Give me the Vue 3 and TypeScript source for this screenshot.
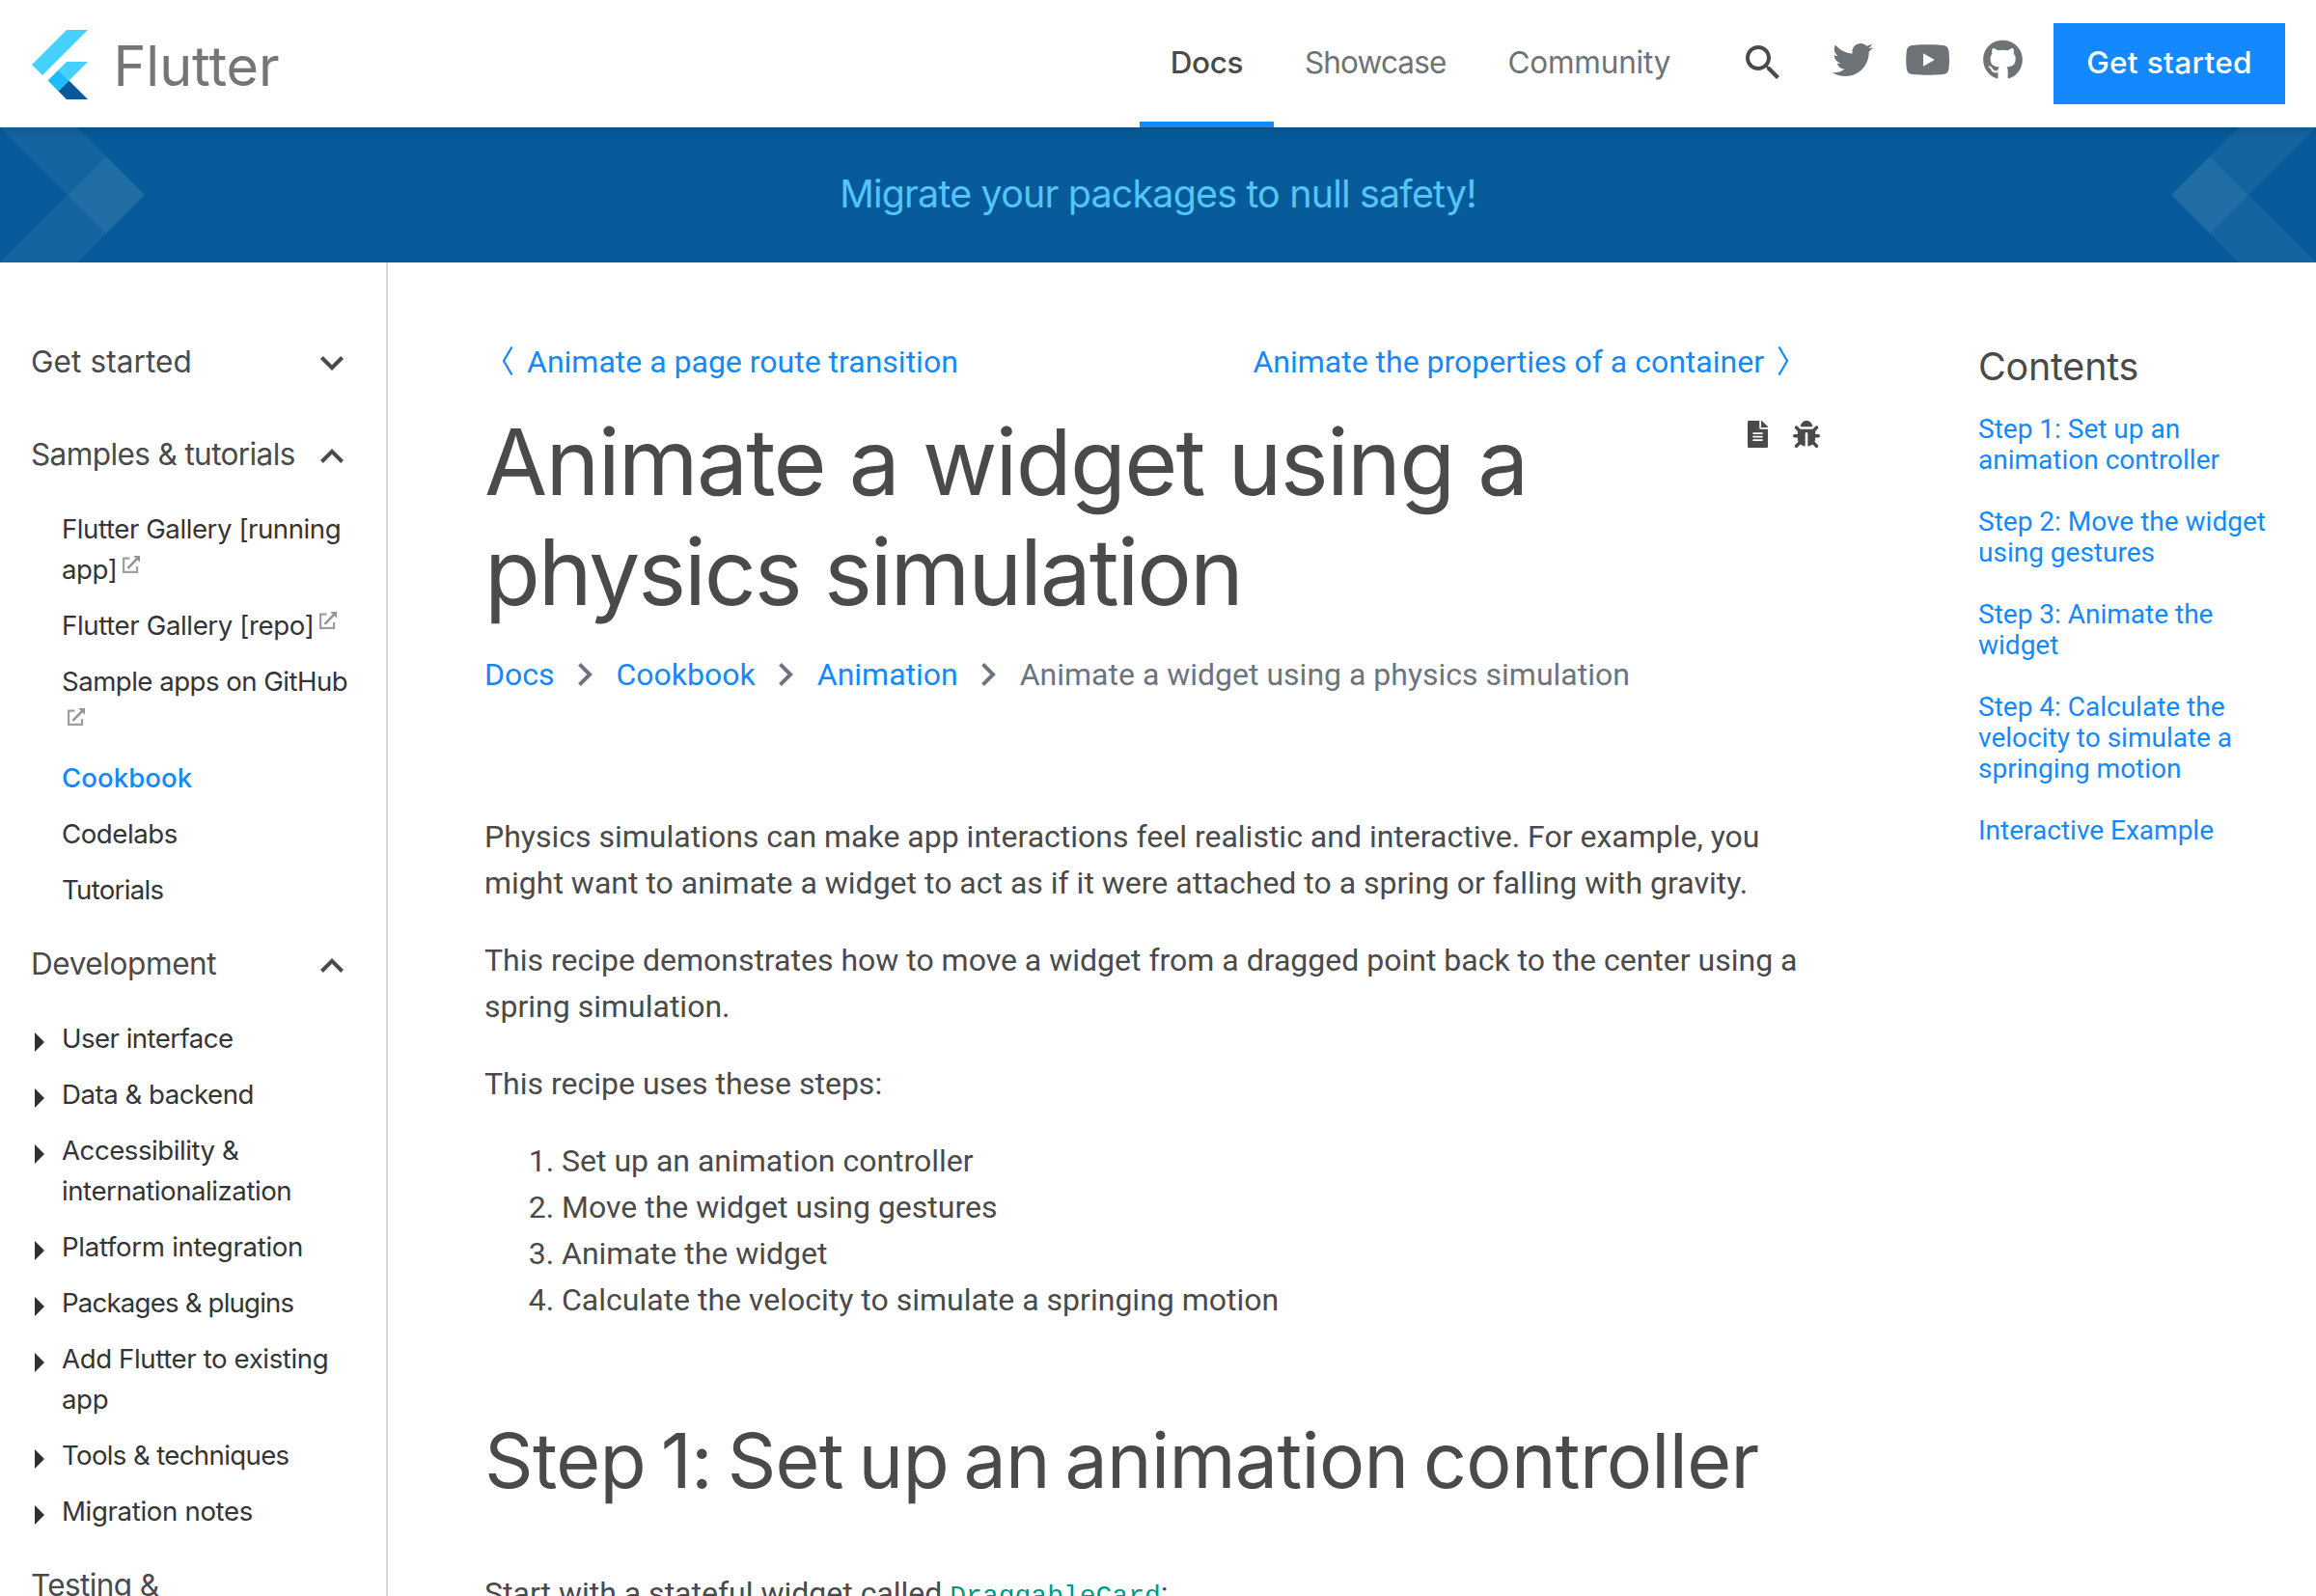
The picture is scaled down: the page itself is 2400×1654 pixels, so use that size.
<script setup lang="ts">
interface Entry {
  label: string
  track: number
  external?: boolean
  active?: boolean
}
interface Section {
  title: string
  track: number
  open: boolean
  nested?: boolean
  items: Entry[]
}

const tabs: Entry[] = [
  { label: 'Docs', track: -0.42, active: true },
  { label: 'Showcase', track: -0.86 },
  { label: 'Community', track: -0.2 },
]

const sections: Section[] = [
  { title: 'Get started', track: 0.1, open: false, items: [] },
  {
    title: 'Samples & tutorials',
    track: -0.6,
    open: true,
    items: [
      { label: 'Flutter Gallery [running app]', track: -0.43, external: true },
      { label: 'Flutter Gallery [repo]', track: -0.37, external: true },
      { label: 'Sample apps on GitHub', track: -0.52, external: true },
      { label: 'Cookbook', track: 0.05, active: true },
      { label: 'Codelabs', track: -0.42 },
      { label: 'Tutorials', track: -0.7 },
    ],
  },
  {
    title: 'Development',
    track: -0.4,
    open: true,
    nested: true,
    items: [
      { label: 'User interface', track: -0.54 },
      { label: 'Data & backend', track: -0.48 },
      { label: 'Accessibility & internationalization', track: -0.45 },
      { label: 'Platform integration', track: -0.3 },
      { label: 'Packages & plugins', track: -0.8 },
      { label: 'Add Flutter to existing app', track: -0.38 },
      { label: 'Tools & techniques', track: -0.64 },
      { label: 'Migration notes', track: -0.33 },
    ],
  },
  { title: 'Testing & debugging', track: -0.6, open: false, items: [] },
]

const headingLines: { text: string; track: number }[] = [
  { text: 'Animate a widget using a', track: -1.76 },
  { text: 'physics simulation', track: -2.14 },
]

const crumbs: string[] = ['Docs', 'Cookbook', 'Animation']

const steps: string[] = [
  'Set up an animation controller',
  'Move the widget using gestures',
  'Animate the widget',
  'Calculate the velocity to simulate a springing motion',
]

const contents: string[] = [
  'Step 1: Set up an animation controller',
  'Step 2: Move the widget using gestures',
  'Step 3: Animate the widget',
  'Step 4: Calculate the velocity to simulate a springing motion',
  'Interactive Example',
]
</script>

<template>
  <div class="page">
    <header class="header">
      <a class="brand">
        <svg class="brand-mark" width="58" height="72" viewBox="0 0 58 72">
          <path fill="#44d1fd" d="M36 0h22L11 47 0 36z" />
          <path fill="#44d1fd" d="M36 33h22L38.500 52.500 27.500 41.500z" />
          <path fill="#1fbcfd" d="M16.500 52.500l11-11 11 11-11 11z" />
          <path fill="#08589c" d="M27.500 63.500l11-11L58 72H36z" />
        </svg>
        <span class="brand-name">Flutter</span>
      </a>
      <nav class="tabs">
        <a
          v-for="tab in tabs"
          :key="tab.label"
          class="tab"
          :class="{ 'tab-active': tab.active }"
          :style="{ letterSpacing: tab.track + 'px' }"
          >{{ tab.label }}</a
        >
      </nav>
      <svg class="search" width="48" height="48" viewBox="0 0 24 24">
        <path d="M15.500 14h-.79l-.28-.27C15.410 12.590 16 11.110 16 9.500 16 5.910 13.090 3 9.500 3S3 5.910 3 9.500 5.910 16 9.500 16c1.610 0 3.090-.59 4.230-1.570l.27.28v.79l5 4.990L20.490 19l-4.990-5zm-6 0C7.010 14 5 11.990 5 9.500S7.010 5 9.500 5 14 7.010 14 9.500 11.990 14 9.500 14z" />
      </svg>
      <svg class="social twitter" width="42" height="42" viewBox="0 0 512 512">
        <path d="M459.37 151.716c.325 4.548.325 9.097.325 13.645 0 138.72-105.583 298.558-298.558 298.558-59.452 0-114.68-17.219-161.137-47.106 8.447.974 16.568 1.299 25.34 1.299 49.055 0 94.213-16.568 130.274-44.832-46.132-.975-84.792-31.188-98.112-72.772 6.498.974 12.995 1.624 19.818 1.624 9.421 0 18.843-1.3 27.614-3.573-48.081-9.747-84.143-51.98-84.143-102.985v-1.299c13.969 7.797 30.214 12.67 47.431 13.319-28.264-18.843-46.781-51.005-46.781-87.391 0-19.492 5.197-37.36 14.294-52.954 51.655 63.675 129.3 105.258 216.365 109.807-1.624-7.797-2.599-15.918-2.599-24.04 0-57.828 46.782-104.934 104.934-104.934 30.213 0 57.502 12.67 76.67 33.137 23.715-4.548 46.456-13.32 66.599-25.34-7.798 24.366-24.366 44.833-46.132 57.827 21.117-2.273 41.584-8.122 60.426-16.243-14.292 20.791-32.161 39.308-52.628 54.253z" />
      </svg>
      <svg class="social youtube" width="47.250" height="42" viewBox="0 0 576 512">
        <path d="M549.655 124.083c-6.281-23.65-24.787-42.276-48.284-48.597C458.781 64 288 64 288 64S117.22 64 74.629 75.486c-23.497 6.322-42.003 24.947-48.284 48.597-11.412 42.867-11.412 132.305-11.412 132.305s0 89.438 11.412 132.305c6.281 23.65 24.787 41.5 48.284 47.821C117.22 448 288 448 288 448s170.78 0 213.371-11.486c23.497-6.321 42.003-24.171 48.284-47.821 11.412-42.867 11.412-132.305 11.412-132.305s0-89.438-11.412-132.305zm-317.51 213.508V175.185l142.739 81.205-142.739 81.201z" />
      </svg>
      <svg class="social github" width="41" height="42" viewBox="0 0 496 512">
        <path d="M165.9 397.4c0 2-2.3 3.6-5.2 3.6-3.3.3-5.6-1.3-5.6-3.6 0-2 2.3-3.6 5.2-3.6 3-.3 5.600 1.300 5.600 3.600zm-31.100-4.500c-.7 2 1.300 4.300 4.300 4.900 2.600 1 5.600 0 6.200-2s-1.300-4.300-4.300-5.200c-2.600-.7-5.500.3-6.200 2.300zm44.200-1.700c-2.900.7-4.900 2.600-4.600 4.900.3 2 2.900 3.300 5.900 2.600 2.900-.7 4.900-2.600 4.600-4.600-.3-1.900-3-3.200-5.900-2.900zM244.800 8C106.100 8 0 113.300 0 252c0 110.900 69.800 205.800 169.500 239.200 12.800 2.300 17.300-5.600 17.300-12.100 0-6.200-.3-40.400-.3-61.400 0 0-70 15-84.700-29.800 0 0-11.400-29.100-27.800-36.600 0 0-22.900-15.700 1.600-15.400 0 0 24.900 2 38.600 25.800 21.900 38.600 58.600 27.500 72.900 20.900 2.300-16 8.800-27.100 16-33.700-55.900-6.200-112.300-14.300-112.300-110.500 0-27.500 7.600-41.300 23.600-58.900-2.600-6.500-11.100-33.300 2.600-67.900 20.900-6.500 69 27 69 27 20-5.600 41.500-8.500 62.800-8.500s42.800 2.900 62.800 8.500c0 0 48.100-33.600 69-27 13.700 34.700 5.200 61.400 2.600 67.900 16 17.700 25.800 31.500 25.800 58.900 0 96.500-58.900 104.200-114.800 110.500 9.200 7.900 17 22.900 17 46.400 0 33.700-.3 75.400-.3 83.600 0 6.500 4.600 14.400 17.300 12.100C428.200 457.800 496 362.900 496 252 496 113.300 383.500 8 244.800 8z" />
      </svg>
      <a class="cta">Get started</a>
    </header>

    <div class="banner">
      <svg width="150" height="140" viewBox="0 0 150 140">
        <path class="band" d="M0 0h80l70 70-40 40z" />
        <path class="band" d="M0 140h80l70-70-40-40z" />
      </svg>
      <a class="banner-text">Migrate your packages to null safety!</a>
      <svg width="150" height="140" viewBox="0 0 150 140">
        <path class="band" d="M150 0H70L0 70l40 40z" />
        <path class="band" d="M150 140H70L0 70l40-40z" />
      </svg>
    </div>

    <div class="body">
      <aside class="sidebar">
        <section v-for="s in sections" :key="s.title" class="section" :class="{ open: s.open }">
          <div class="section-title" :style="{ letterSpacing: s.track + 'px' }">
            <span class="section-name">{{ s.title }}</span>
            <svg class="toggle" width="24" height="15" viewBox="6 8.590 12 7.410">
              <path v-if="s.open" d="M12 8.590l-6 6L7.410 16 12 11.420 16.590 16 18 14.590z" />
              <path v-else d="M16.590 8.590L12 13.170 7.410 8.590 6 10l6 6 6-6z" />
            </svg>
          </div>
          <ul v-if="s.open" class="entries">
            <li v-for="e in s.items" :key="e.label" class="entry" :class="{ 'entry-active': e.active }">
              <span class="marker">
                <svg v-if="s.nested" width="10" height="20" viewBox="0 0 10 20">
                  <path d="M0 0l10 10L0 20z" />
                </svg>
              </span>
              <span class="entry-label" :style="{ letterSpacing: e.track + 'px' }"
                >{{ e.label
                }}<svg v-if="e.external" class="external" width="18" height="18" viewBox="0 0 18 18">
                  <path d="M7.500 2.600H1.100V16.900h14v-6" fill="none" stroke="#9e9e9e" stroke-width="2.200" />
                  <path d="M5.400 12.800L15 3.200" stroke="#959595" stroke-width="2.600" />
                  <path d="M11.200 0H18v6.800z" fill="#959595" />
                </svg>
              </span>
            </li>
          </ul>
        </section>
      </aside>

      <main class="main">
        <nav class="pager">
          <a class="pager-link">
            <svg width="12" height="30" viewBox="0 0 12 30"><path d="M10.500 .5L2 15l8.500 14.500" /></svg>
            <span>Animate a page route transition</span>
          </a>
          <a class="pager-link">
            <span>Animate the properties of a container</span>
            <svg width="12" height="30" viewBox="0 0 12 30"><path d="M1.500 .5L10 15 1.500 29.500" /></svg>
          </a>
        </nav>

        <div class="heading">
          <h1>
            <span
              v-for="line in headingLines"
              :key="line.text"
              class="heading-line"
              :style="{ letterSpacing: line.track + 'px' }"
              >{{ line.text }}</span
            >
          </h1>
          <div class="page-tools">
            <svg width="21" height="28" viewBox="0 0 384 512">
              <path d="M224 136V0H24C10.7 0 0 10.7 0 24v464c0 13.3 10.7 24 24 24h336c13.3 0 24-10.7 24-24V160H248c-13.2 0-24-10.8-24-24zm64 236c0 6.6-5.4 12-12 12H108c-6.6 0-12-5.4-12-12v-8c0-6.6 5.4-12 12-12h168c6.6 0 12 5.4 12 12v8zm0-64c0 6.6-5.4 12-12 12H108c-6.6 0-12-5.4-12-12v-8c0-6.6 5.4-12 12-12h168c6.6 0 12 5.4 12 12v8zm0-72v8c0 6.6-5.4 12-12 12H108c-6.6 0-12-5.4-12-12v-8c0-6.6 5.4-12 12-12h168c6.6 0 12 5.4 12 12zm96-114.1v6.1H256V0h6.1c6.4 0 12.5 2.5 17 7l97.9 98c4.5 4.5 7 10.6 7 16.9z" />
            </svg>
            <svg width="28" height="28" viewBox="0 0 512 512">
              <path d="M511.988 288.9c-.478 17.43-15.217 31.1-32.653 31.1H424v16c0 21.864-4.882 42.584-13.6 61.145l60.228 60.228c12.496 12.497 12.496 32.758 0 45.255-12.498 12.497-32.759 12.496-45.256 0l-54.736-54.736C345.886 467.965 314.351 480 280 480V236c0-6.627-5.373-12-12-12h-24c-6.627 0-12 5.373-12 12v244c-34.351 0-65.886-12.035-90.636-32.108l-54.736 54.736c-12.498 12.497-32.759 12.496-45.256 0-12.496-12.497-12.496-32.758 0-45.255l60.228-60.228C92.882 378.584 88 357.864 88 336v-16H32.666C15.23 320 .491 306.33.013 288.9-.484 270.816 14.028 256 32 256h56v-58.745l-46.628-46.628c-12.496-12.497-12.496-32.758 0-45.255 12.498-12.497 32.758-12.497 45.256 0L141.255 160h229.489l54.627-54.627c12.498-12.497 32.758-12.497 45.256 0 12.496 12.497 12.496 32.758 0 45.255L424 197.255V256h56c17.972 0 32.484 14.816 31.988 32.9zM257 0c-61.856 0-112 50.144-112 112h224C369 50.144 318.856 0 257 0z" />
            </svg>
          </div>
        </div>

        <div class="breadcrumb">
          <template v-for="c in crumbs" :key="c">
            <a>{{ c }}</a>
            <svg width="15" height="24" viewBox="8.590 6 7.410 12">
              <path d="M10 6L8.590 7.410 13.170 12l-4.580 4.590L10 18l6-6z" />
            </svg>
          </template>
          <span>Animate a widget using a physics simulation</span>
        </div>

        <article class="article">
          <p>
            Physics simulations can make app interactions feel realistic and interactive. For example, you
            might want to animate a widget to act as if it were attached to a spring or falling with gravity.
          </p>
          <p>
            This recipe demonstrates how to move a widget from a dragged point back to the center using a
            spring simulation.
          </p>
          <p>This recipe uses these steps:</p>
          <ol>
            <li v-for="s in steps" :key="s">{{ s }}</li>
          </ol>
          <h2>Step 1: Set up an animation controller</h2>
          <p>Start with a stateful widget called <code>DraggableCard</code>:</p>
        </article>
      </main>

      <aside class="toc">
        <div class="toc-title">Contents</div>
        <a v-for="t in contents" :key="t" class="toc-link">{{ t }}</a>
      </aside>
    </div>
  </div>
</template>

<style>
body {
  margin: 0;
  background: #fff;
}
</style>

<style scoped>
.page {
  width: 2400px;
  height: 1654px;
  overflow: hidden;
  display: flex;
  flex-direction: column;
  background: #fff;
  color: #4a4a4a;
  font-family: Roboto, sans-serif;
  font-size: 32px;
  line-height: 48px;
}
svg {
  display: block;
  flex: none;
}

.header {
  position: relative;
  z-index: 1;
  flex: none;
  box-sizing: border-box;
  height: 132px;
  padding: 0 32px 0 33px;
  display: flex;
  align-items: flex-start;
  background: #fff;
  box-shadow: 0 2px 10px rgba(0, 0, 0, 0.16);
  font-family: Inter, sans-serif;
  font-size: 31.5px;
}
.brand {
  display: flex;
  padding-top: 31px;
}
.brand-name {
  margin-left: 26.500px;
  font-size: 57.500px;
  line-height: 75px;
  letter-spacing: -0.1px;
  color: #757575;
}
.tabs {
  display: flex;
  align-self: stretch;
  margin-left: auto;
}
.tab {
  box-sizing: border-box;
  height: 132px;
  padding: 41px 32px 0;
  color: #6e7377;
}
.tab-active {
  border-bottom: 6px solid #1389fd;
  color: #4a4a4a;
  font-weight: 500;
}
.search {
  margin: 41px 48px 0 40px;
  fill: #4a4a4a;
}
.social {
  margin-top: 41px;
  fill: #6e7377;
}
.twitter {
  margin-right: 32.500px;
}
.youtube {
  margin-right: 33.500px;
}
.github {
  margin-right: 32.500px;
}
.cta {
  width: 240px;
  height: 84px;
  margin-top: 24px;
  background: #1389fd;
  color: #fff;
  text-align: center;
  line-height: 81px;
  font-weight: 500;
  letter-spacing: 0.34px;
}

.banner {
  flex: none;
  height: 140px;
  display: flex;
  justify-content: space-between;
  background: #075b9a;
}
.band {
  fill: #fff;
  fill-opacity: 0.055;
}
.banner-text {
  font-family: Inter, sans-serif;
  font-size: 39.400px;
  line-height: 138px;
  letter-spacing: -0.8px;
  color: #54c5f8;
}

.body {
  flex: 1;
  min-height: 0;
  display: flex;
}

.sidebar {
  box-sizing: border-box;
  flex: none;
  width: 402px;
  padding: 79px 32px 0;
  border-right: 2px solid #d8d8d8;
  overflow: hidden;
  font-family: Inter, sans-serif;
}
.section {
  margin-bottom: 48px;
}
.section.open {
  margin-bottom: 32px;
}
.section-title {
  display: flex;
  justify-content: space-between;
  align-items: center;
  font-size: 31.5px;
}
.section-name {
  max-width: 280px;
}
.toggle {
  margin: 2px 12px 0 0;
  fill: #4a4a4a;
}
.entries {
  display: flex;
  flex-direction: column;
  gap: 16px;
  margin: 32px 0 0;
  padding: 0;
  list-style: none;
  font-size: 27.600px;
  line-height: 42px;
  color: #343434;
}
.entry {
  display: flex;
}
.entry-active {
  color: #1389fd;
  font-weight: 500;
}
.marker {
  box-sizing: border-box;
  flex: none;
  width: 32px;
  padding: 15px 0 0 4px;
  fill: #303030;
}
.external {
  display: inline-block;
  margin-left: 6px;
  vertical-align: 6px;
}

.main {
  flex: none;
  width: 1384px;
  padding: 79px 0 0 100px;
}
.pager {
  display: flex;
  justify-content: space-between;
  padding: 0 32px 0 18px;
  color: #1389fd;
}
.pager-link {
  display: flex;
  gap: 14px;
}
.pager-link svg {
  margin-top: 8px;
  fill: none;
  stroke: currentColor;
  stroke-width: 2.200;
}
.heading {
  display: flex;
  align-items: flex-start;
  margin-top: 23px;
}
h1 {
  flex: 1;
  margin: 0;
  font-family: Inter, sans-serif;
  font-weight: 400;
  font-size: 94.600px;
  line-height: 114px;
}
.heading-line {
  display: block;
}
.page-tools {
  display: flex;
  gap: 26px;
  padding-top: 14px;
  fill: #4a4a4a;
}
.breadcrumb {
  display: flex;
  align-items: center;
  gap: 24.500px;
  margin-top: 25px;
  color: #6c757d;
  fill: #6c757d;
}
.breadcrumb a {
  color: #1389fd;
}

.article {
  margin-top: 120px;
}
.article p,
.article ol {
  margin: 0 0 32px;
}
.article ol {
  padding-left: 80px;
}
.article h2 {
  margin: 95px 0 65px;
  font-family: Inter, sans-serif;
  font-weight: 400;
  font-size: 78.800px;
  line-height: 96px;
  letter-spacing: -0.65px;
  word-spacing: -6px;
  white-space: nowrap;
}
code {
  font-family: "Liberation Mono", monospace;
  font-size: 28px;
  color: #009688;
}

.toc {
  box-sizing: border-box;
  width: 318px;
  margin-left: 164px;
  padding-top: 84px;
  display: flex;
  flex-direction: column;
  gap: 32px;
}
.toc-title {
  margin-bottom: -7px;
  font-family: Inter, sans-serif;
  font-size: 39.400px;
  letter-spacing: -0.2px;
}
.toc-link {
  font-size: 28px;
  line-height: 32px;
  color: #1389fd;
}
</style>
